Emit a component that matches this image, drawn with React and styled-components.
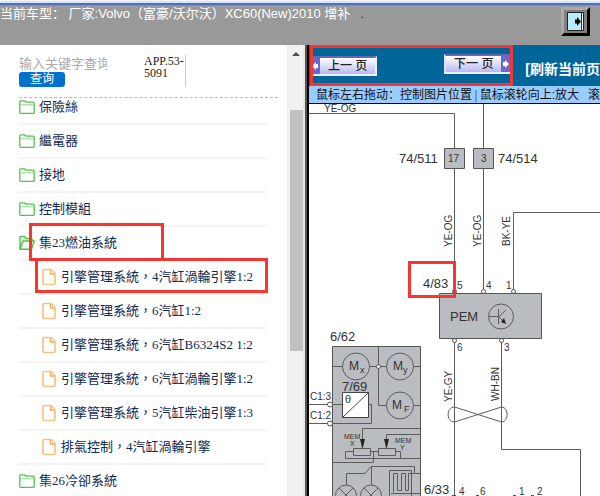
import React from "react";
import styled, { createGlobalStyle } from "styled-components";

const GlobalStyle = createGlobalStyle`
  * { box-sizing: border-box; }
  body { margin: 0; background: #fff; overflow: hidden; }
  button, input { font: inherit; }
`;

const sans = `"Liberation Sans", "Noto Sans CJK SC", sans-serif`;
const serif = `"Liberation Serif", "Noto Sans CJK TC", serif`;

const Page = styled.div`
  display: flex;
  flex-direction: column;
  height: 100vh;
  font-family: ${sans};
`;

const TitleStrip = styled.div`
  flex: none;
  height: 6px;
  background: linear-gradient(#f2f5fb 0 1px, #dbe4f4 1px 3px, #4a70c4 3px 5px, #8391ae 5px);
`;

const Header = styled.header`
  flex: none;
  display: flex;
  justify-content: space-between;
  align-items: flex-start;
  height: 39px;
  padding: 0 10px 0 0;
  background: #999;
  color: #fff;
`;

const ModelText = styled.div`
  display: flex;
  gap: 10px;
  font-size: 13px;
  line-height: 16px;
  white-space: pre;
`;

const Dot = styled.span`
  color: #333;
`;

const ExitButton = styled.button`
  display: grid;
  place-items: center;
  width: 29px;
  height: 29px;
  margin-top: 1px;
  padding: 0;
  border: 3px solid;
  border-color: #aaa #000 #000 #aaa;
  background: #808080;
`;

const Body = styled.div`
  flex: 1;
  min-height: 0;
  display: flex;
`;

const Sidebar = styled.aside`
  flex: none;
  display: flex;
  width: 303px;
  font-family: ${serif};
`;

const SideContent = styled.div`
  flex: 1;
  min-width: 0;
  overflow: hidden;
  padding: 10px 9px 0 19px;
`;

const SearchArea = styled.form`
  display: flex;
  align-items: flex-start;
  height: 43px;
  border-bottom: 1px dashed #bbb;
`;

const SearchFields = styled.div`
  display: flex;
  flex-direction: column;
  align-items: flex-start;
  width: 125px;
`;

const SearchInput = styled.input`
  width: 88px;
  height: 17px;
  padding: 0;
  border: 0;
  outline: 0;
  font-family: ${sans};
  font-size: 13px;
  line-height: 17px;
  &::placeholder { color: #aaa; opacity: 1; }
`;

const SearchButton = styled.button`
  width: 46px;
  height: 15px;
  padding: 0;
  border: 0;
  border-radius: 3px;
  background: #0072ce;
  color: #fff;
  font-family: ${sans};
  font-size: 12px;
  line-height: 15px;
`;

const Code = styled.div`
  width: 42px;
  height: 32px;
  border-right: 1px solid #ccc;
  color: #222;
  font-size: 12px;
  line-height: 12px;
`;

const Tree = styled.ul`
  margin: 0 11px 0 0;
  padding: 0;
  list-style: none;
`;

const Row = styled.li`
  position: relative;
  height: 27px;
  padding-left: ${(p) => (p.$leaf ? "22px" : "0")};
  border-bottom: 2px solid #f4f4f4;
  & + & { margin-top: 7px; }
`;

const RowLink = styled.a`
  display: flex;
  align-items: center;
  gap: 4px;
  height: 18px;
  color: #122b52;
  font-size: 13px;
  line-height: 18px;
  white-space: nowrap;
  text-decoration: none;
  svg { flex: none; }
`;

const Mark = styled.div`
  position: absolute;
  z-index: 1;
  top: ${(p) => p.$top}px;
  left: ${(p) => p.$left}px;
  width: ${(p) => p.$width}px;
  height: ${(p) => p.$height}px;
  border: 3px solid #f73631;
  pointer-events: none;
`;

const ScrollTrack = styled.div`
  flex: none;
  display: flex;
  flex-direction: column;
  align-items: center;
  width: 16px;
  padding: 7px 0 0 2px;
  background: #f1f1f1;
`;

const ScrollThumb = styled.div`
  width: 13px;
  height: 241px;
  margin-top: 54px;
  background: #c1c1c1;
`;

const Splitter = styled.div`
  flex: none;
  width: 6px;
  border-left: 2px solid #e6e6e6;
  border-right: 2px solid #000;
  background: #555;
`;

const Viewer = styled.main`
  flex: 1;
  min-width: 0;
  display: flex;
  flex-direction: column;
`;

const Toolbar = styled.div`
  position: relative;
  flex: none;
  display: flex;
  align-items: flex-start;
  height: 41px;
  padding-top: 9px;
  background: #069;
`;

const NavButton = styled.button`
  display: flex;
  align-items: center;
  width: 68px;
  height: 20px;
  margin: ${(p) => (p.$next ? "0 0 0 67px" : "2px 0 0 1px")};
  padding: 0;
  overflow: hidden;
  border: 2px solid;
  border-color: #6767b4 #eeeefc #eeeefc #e2e2f8;
  border-${(p) => (p.$next ? "right" : "left")}: 0;
  background: linear-gradient(#fff, #e0e0fb 45%, #b9b9f0);
  color: #222;
  font-size: 12px;
  line-height: 16px;
  white-space: pre;
`;

const NavText = styled.span`
  flex: 1;
  text-align: center;
  font-weight: 500;
`;

const RefreshLink = styled.a`
  margin: 6px 0 0 14px;
  color: #fff;
  font-size: 14px;
  font-weight: bold;
  line-height: 18px;
  white-space: nowrap;
  text-decoration: none;
`;

const HintBar = styled.div`
  flex: none;
  display: flex;
  height: 18px;
  padding-left: 7px;
  border-bottom: 1px solid #000;
  background: #9cf;
  color: #111;
  font-size: 12px;
  line-height: 18px;
  white-space: nowrap;
`;

const Divider = styled.span`
  width: 9px;
  text-align: center;
  color: #4169b8;
`;

const LastHint = styled.span`
  margin-left: 9px;
`;

const Canvas = styled.div`
  position: relative;
  flex: 1;
  min-height: 0;
  overflow: hidden;
  background: #fff;
  svg { display: block; }
`;

const FolderIcon = ({ open }) => (
  <svg width="16" height="16" viewBox="0 0 16 16" fill="#effbe8" stroke="#55bf50" strokeLinejoin="round" aria-hidden="true">
    {open ? (
      <>
        <path d="M1 14V2.5Q1 1.5 2 1.5H5.5L7 3.5H13V6" strokeWidth="1.4" />
        <path d="M1 14.3L4 6H15.3L12.5 14.3Z" strokeWidth="1.4" />
      </>
    ) : (
      <>
        <path d="M.8 13V2.8Q.8 1.8 1.8 1.8H5.5L7 3.2H14Q15.2 3.2 15.2 4.2V13.5Q15.2 14.4 14.2 14.4H1.8Q.8 14.4 .8 13Z" fill="#fff" strokeWidth="1.3" />
        <path d="M1 5.8H15" stroke="#8fd68b" />
      </>
    )}
  </svg>
);

const FileIcon = () => (
  <svg width="16" height="18" viewBox="0 0 16 18" fill="#fff" stroke="#f9c285" strokeWidth="1.7" strokeLinejoin="round" aria-hidden="true">
    <path d="M3 1.5H10L14 5.5V15Q14 16.5 12.5 16.5H3.5Q2 16.5 2 15V2.5Q2 1.5 3 1.5Z" />
    <path d="M9.5 2V6H13.5" strokeWidth="1.4" stroke="#f5a955" />
  </svg>
);

const Arrow = ({ next }) => (
  <svg width="10" height="16" viewBox="0 0 10 16" aria-hidden="true">
    <path d="M0 0H10V16H0Z" fill="#6868cf" />
    <path d={next ? "M2 6H4V4L8 8L4 12V10H2Z" : "M8 6H6V4L2 8L6 12V10H8Z"} fill="#fff" />
  </svg>
);

const rows = [
  { text: "保險絲" },
  { text: "繼電器" },
  { text: "接地" },
  { text: "控制模組" },
  { text: "集23燃油系統", open: true, mark: [-11, 10, 135, 38] },
  { text: "引擎管理系統，4汽缸渦輪引擎1:2", leaf: true, mark: [-10, 16, 233, 35] },
  { text: "引擎管理系統，6汽缸1:2", leaf: true },
  { text: "引擎管理系統，6汽缸B6324S2 1:2", leaf: true },
  { text: "引擎管理系統，6汽缸渦輪引擎1:2", leaf: true },
  { text: "引擎管理系統，5汽缸柴油引擎1:3", leaf: true },
  { text: "排氣控制，4汽缸渦輪引擎", leaf: true },
  { text: "集26冷卻系統" },
];

const Label = ({ x, y, size = 10, up, children }) => (
  <text x={x} y={y} fontSize={size} transform={up ? `rotate(-90 ${x} ${y})` : undefined}>
    {children}
  </text>
);

const Wiring = () => (
  <svg width="291" height="392" viewBox="309 104 291 392" role="img" aria-label="Wiring diagram">
    <g fill="#b9bcc0" stroke="#555">
      <path d="M444.5 148.5H464.5V168.5H444.5ZM473.5 148.5H493.5V168.5H473.5Z" />
      <path d="M439.5 293.5H541.5V338.5H439.5Z" />
      <path d="M332.5 346.5H420.5V500H332.5Z" />
    </g>
    <g fill="none" stroke="#5c5c5c">
      <path d="M309 113.5H454.5V148M454.5 168V290M483.5 104V148M483.5 168V290M600 212.5H513.5V290" />
      <path d="M454.5 342V496M501.5 342V449.5H580.5V496" />
      <path d="M454.5 407C446 407 446 422 454.5 422L501.5 407C509 407 509 422 501.5 422Z" />
      <path d="M378.5 346V405.5H386M333 366.5H342M370 366.5H386M414 366.5H420M414 405.5H420" />
      <path d="M309 404.5H342M309 423.5H371.5V404.5H368" />
      <path d="M362.5 442V428.5H420M386.5 442V434.5H420M370 451.5H378M353 451.5H345.5V458.5H420M395 451.5H400.5V458M373.5 452V462.5H332" />
      <path d="M346.5 485V473.5H365L371 466.5H414.5V473.5H420M371.5 466V485" />
      <circle cx="501" cy="316.5" r="12.5" />
      <path d="M498.5 309V324M489 316.5H499L506 310M499 317L505 323" />
      <circle cx="356" cy="366.5" r="13.5" /><circle cx="400" cy="366.5" r="13.5" /><circle cx="400" cy="405.5" r="13.5" />
      <path d="M353.5 448.5H370.5V455.5H353.5ZM378.5 448.5H395.5V455.5H378.5Z" />
      <circle cx="346" cy="495.5" r="10.5" /><circle cx="371" cy="495.5" r="10.5" />
      <path d="M339 488L354 503M353 488L338 503M364 488L379 503M378 488L363 503" />
      <path d="M389.5 496V470.5H411.5V496M393.5 492V473.5H397.5V490.5H401.5V473.5H405.5V490.5H408.5V473.5H414M391 493.5H420" />
    </g>
    <path d="M342.5 392.5H368.5V417.5H342.5ZM342.5 417.5L368.5 392.5" fill="#fff" stroke="#444" />
    <path d="M360 439H365L362.5 449ZM384 439H389L386.5 449ZM501 322L506 324L504 318Z" fill="#222" />
    <g fill="#fff" stroke="#555">
      <circle cx="454.5" cy="291.5" r="2" /><circle cx="483.5" cy="291.5" r="2" /><circle cx="513.5" cy="291.5" r="2" />
      <circle cx="454.5" cy="340.5" r="2" /><circle cx="501.5" cy="340.5" r="2" /><circle cx="378.5" cy="366.5" r="2" />
      <circle cx="330" cy="404.5" r="2.5" /><circle cx="330" cy="423.5" r="2.5" />
    </g>
    <path d="M476 495.5H479M513 495.5H516M531 495.5H534M452 495.5H456" stroke="#555" />
    <g fill="#333">
      <Label x={324} y={112}>YE-OG</Label>
      <Label x={399} y={163} size={13}>74/511</Label>
      <Label x={498} y={163} size={13}>74/514</Label>
      <Label x={448} y={162}>17</Label>
      <Label x={481} y={162}>3</Label>
      <Label x={452} y={247} up>YE-OG</Label>
      <Label x={481} y={247} up>YE-OG</Label>
      <Label x={510} y={246} up>BK-YE</Label>
      <Label x={423} y={288} size={13}>4/83</Label>
      <Label x={457} y={289}>5</Label>
      <Label x={486} y={289}>4</Label>
      <Label x={506} y={289}>1</Label>
      <Label x={450} y={321} size={13}>PEM</Label>
      <Label x={457} y={351}>6</Label>
      <Label x={504} y={351}>3</Label>
      <Label x={330} y={341} size={13}>6/62</Label>
      <Label x={349} y={370} size={12}>M</Label>
      <Label x={360} y={373} size={9}>x</Label>
      <Label x={393} y={370} size={12}>M</Label>
      <Label x={403} y={373} size={9}>y</Label>
      <Label x={392} y={409} size={12}>M</Label>
      <Label x={404} y={412} size={9}>F</Label>
      <Label x={342} y={391} size={13}>7/69</Label>
      <Label x={345} y={403} size={11}>θ</Label>
      <Label x={310} y={400}>C1:3</Label>
      <Label x={310} y={419}>C1:2</Label>
      <Label x={344} y={439} size={7}>MEM</Label>
      <Label x={350} y={446} size={7}>X</Label>
      <Label x={395} y={443} size={7}>MEM</Label>
      <Label x={400} y={450} size={7}>Y</Label>
      <Label x={424} y={494} size={13}>6/33</Label>
      <Label x={452} y={402} up>YE-GY</Label>
      <Label x={499} y={401} up>WH-BN</Label>
      <Label x={459} y={495}>4</Label>
      <Label x={480} y={495}>6</Label>
      <Label x={519} y={495}>1</Label>
      <Label x={537} y={495}>2</Label>
    </g>
  </svg>
);

export default function App() {
  return (
    <Page>
      <GlobalStyle />
      <TitleStrip />
      <Header>
        <ModelText>
          <span>当前车型： 厂家:Volvo（富豪/沃尔沃）XC60(New)2010 增补</span>
          <Dot>.</Dot>
        </ModelText>
        <ExitButton aria-label="Exit">
          <svg width="17" height="19" viewBox="0 0 17 19" aria-hidden="true">
            <path d="M.5 .5H16.5V18.5H.5Z" fill="#b9edfb" stroke="#222" />
            <path d="M14 1H16V18H14Z" fill="#fff" />
            <path d="M14.5 1V18" stroke="#333" />
            <path d="M8 7.5H10V5L14 9.5L10 14V11.5H8Z" fill="#000" />
          </svg>
        </ExitButton>
      </Header>
      <Body>
        <Sidebar>
          <SideContent>
            <SearchArea>
              <SearchFields>
                <SearchInput aria-label="输入关键字查询" placeholder="输入关键字查询" />
                <SearchButton type="button">查询</SearchButton>
              </SearchFields>
              <Code>APP.53-5091</Code>
            </SearchArea>
            <Tree>
              {rows.map((r) => (
                <Row key={r.text} $leaf={r.leaf}>
                  <RowLink href="#">
                    {r.leaf ? <FileIcon /> : <FolderIcon open={r.open} />}
                    {r.text}
                  </RowLink>
                  {r.mark && <Mark $top={r.mark[0]} $left={r.mark[1]} $width={r.mark[2]} $height={r.mark[3]} />}
                </Row>
              ))}
            </Tree>
          </SideContent>
          <ScrollTrack>
            <svg width="8" height="4" viewBox="0 0 8 4" aria-hidden="true"><path d="M0 4L4 0L8 4Z" fill="#505050" /></svg>
            <ScrollThumb />
          </ScrollTrack>
        </Sidebar>
        <Splitter />
        <Viewer>
          <Toolbar>
            <NavButton><Arrow /><NavText>上一 页</NavText></NavButton>
            <NavButton $next><NavText>下一 页</NavText><Arrow next /></NavButton>
            <RefreshLink href="#">[刷新当前页</RefreshLink>
            <Mark $top={0} $left={1} $width={203} $height={41} />
          </Toolbar>
          <HintBar>
            <span>鼠标左右拖动：控制图片位置</span>
            <Divider>|</Divider>
            <span>鼠标滚轮向上:放大</span>
            <LastHint>滚</LastHint>
          </HintBar>
          <Canvas>
            <Wiring />
            <Mark $top={157} $left={99} $width={48} $height={37} />
          </Canvas>
        </Viewer>
      </Body>
    </Page>
  );
}
